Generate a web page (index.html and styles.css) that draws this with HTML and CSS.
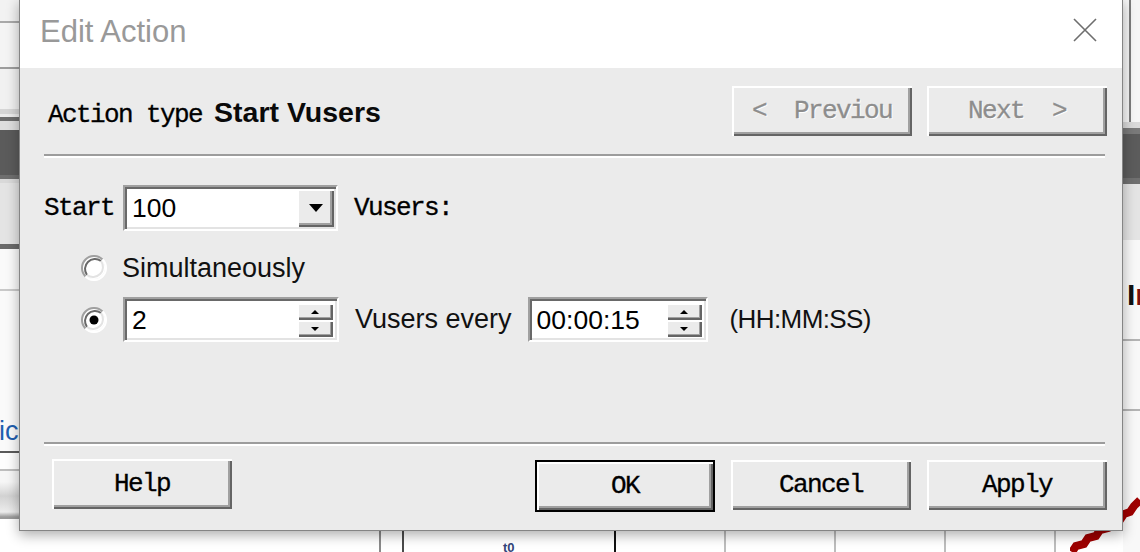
FILE: index.html
```html
<!DOCTYPE html>
<html>
<head>
<meta charset="utf-8">
<link rel="stylesheet" href="styles.css">
</head>
<body>
<div class="screen">
  <div class="strip-left"><span class="bg-text bg-ic">ic</span></div>

  <div class="dialog">
    <div class="titlebar">
      <span class="title">Edit Action</span>
      <svg class="close" width="24" height="24" viewBox="0 0 24 24"><path d="M1 1 L23 23 M23 1 L1 23" stroke="#6e6e6e" stroke-width="1.6" fill="none"/></svg>
    </div>
    <div class="dlg-body">
      <div class="header-row">
        <div class="action-type"><span class="mono">Action type</span><span class="action-name">Start Vusers</span></div>
        <div class="nav-buttons">
          <div class="btn mono disabled">&lt;  Previou</div>
          <div class="btn mono disabled">Next  &gt;</div>
        </div>
      </div>
      <div class="sep"></div>

      <div class="start-row">
        <span class="mono">Start</span>
        <div class="field combo">
          <span class="value">100</span>
          <span class="drop-btn"><svg width="14" height="8" viewBox="0 0 14 8"><path d="M0 0 H14 L7 8 Z" fill="#000"/></svg></span>
        </div>
        <span class="mono">Vusers:</span>
      </div>

      <div class="radio-row first">
        <svg class="radio" width="26" height="26" viewBox="0 0 26 26">
          <circle cx="13" cy="13" r="11" fill="#fff"/>
          <path d="M4.5 21.5 A12 12 0 0 1 21.5 4.5" stroke="#a0a0a0" stroke-width="2" fill="none"/>
          <path d="M6 20 A10 10 0 0 1 20 6" stroke="#696969" stroke-width="2" fill="none"/>
          <path d="M21.5 4.5 A12 12 0 0 1 4.5 21.5" stroke="#fff" stroke-width="2" fill="none"/>
          <path d="M20 6 A10 10 0 0 1 6 20" stroke="#e3e3e3" stroke-width="2" fill="none"/>
        </svg>
        <span class="label">Simultaneously</span>
      </div>

      <div class="radio-row second">
        <svg class="radio" width="26" height="26" viewBox="0 0 26 26">
          <circle cx="13" cy="13" r="11" fill="#fff"/>
          <path d="M4.5 21.5 A12 12 0 0 1 21.5 4.5" stroke="#a0a0a0" stroke-width="2" fill="none"/>
          <path d="M6 20 A10 10 0 0 1 20 6" stroke="#696969" stroke-width="2" fill="none"/>
          <path d="M21.5 4.5 A12 12 0 0 1 4.5 21.5" stroke="#fff" stroke-width="2" fill="none"/>
          <path d="M20 6 A10 10 0 0 1 6 20" stroke="#e3e3e3" stroke-width="2" fill="none"/>
          <circle cx="13" cy="13" r="4.5" fill="#000"/>
        </svg>
        <div class="field spin spin-count">
          <span class="value">2</span>
          <span class="spin-btns">
            <span class="spin-btn"><svg width="8" height="4" viewBox="0 0 8 4"><path d="M0 4 H8 L4 0 Z" fill="#000"/></svg></span>
            <span class="spin-btn"><svg width="8" height="4" viewBox="0 0 8 4"><path d="M0 0 H8 L4 4 Z" fill="#000"/></svg></span>
          </span>
        </div>
        <span class="label">Vusers every</span>
        <div class="field spin spin-time">
          <span class="value">00:00:15</span>
          <span class="spin-btns">
            <span class="spin-btn"><svg width="8" height="4" viewBox="0 0 8 4"><path d="M0 4 H8 L4 0 Z" fill="#000"/></svg></span>
            <span class="spin-btn"><svg width="8" height="4" viewBox="0 0 8 4"><path d="M0 0 H8 L4 4 Z" fill="#000"/></svg></span>
          </span>
        </div>
        <span class="label hint">(HH:MM:SS)</span>
      </div>

      <div class="sep sep-bottom"></div>

      <div class="footer">
        <div class="btn mono help">Help</div>
        <div class="footer-right">
          <div class="btn mono default">OK</div>
          <div class="btn mono">Cancel</div>
          <div class="btn mono">Apply</div>
        </div>
      </div>
    </div>
  </div>

  <div class="strip-right"><span class="bg-text bg-i">I<span class="bg-r">r</span></span></div>
  <div class="strip-bottom"><span class="bg-text bg-t0">t0</span></div>

  <svg class="squiggle" width="70" height="56" viewBox="0 0 70 56">
    <path d="M2 56 L6 50 L14 48 L18 42 L26 40 L30 34 L38 32 L42 26 L50 24 L54 18 L60 16 L64 10 L70 4" stroke="#9e0000" stroke-width="8" fill="none" stroke-linejoin="miter"/>
  </svg>
</div>
</body>
</html>
```

FILE: styles.css
```css
* { box-sizing: border-box; }

html, body {
  margin: 0;
  padding: 0;
  background: #ffffff;
}

.screen {
  position: relative;
  width: 1140px;
  height: 552px;
  overflow: hidden;
  display: grid;
  grid-template-columns: 19px 1104px 17px;
  grid-template-rows: 531px 21px;
  font-family: "Liberation Sans", Arial, sans-serif;
}

/* ---------- backdrop (the application window behind) ---------- */
.strip-left {
  grid-column: 1;
  grid-row: 1 / 3;
  position: relative;
  overflow: hidden;
  background: linear-gradient(to bottom,
    #f2f2f2 0 21px, #a9a9a9 21px 23px, #f4f4f4 23px 67px, #9d9d9d 67px 69px,
    #f1f1f1 69px 109px, #d6d6d6 109px 114px, #ececec 114px 117px, #6e6e6e 117px 121px,
    #dedede 121px 130px, #5b5b5b 130px 175px, #6f6f6f 175px 179px, #d9d9d9 179px 183px,
    #e4e4e4 183px 244px, #6a6a6a 244px 249px, #fafafa 249px 289px, #c9c9c9 289px 291px,
    #fafafa 291px 451px, #5a5a5a 451px 453px, #fdfdfd 453px 469px, #bdbdbd 469px 471px,
    #f6f6f6 471px 482px, #d2d2d2 496px, #ececec 512px, #9a9a9a 517px 519px, #ffffff 519px);
}

.strip-right {
  grid-column: 3;
  grid-row: 1 / 3;
  position: relative;
  overflow: hidden;
  background:
    linear-gradient(to right, transparent 0 6px, #7c7c7c 6px 8px, transparent 8px) top left / 100% 122px no-repeat,
    linear-gradient(to bottom,
      #f6f6f6 0 122px, #dadada 122px 128px, #7a7a7a 128px 134px, #5c5c5c 134px 178px,
      #707070 178px 184px, #e4e4e4 184px 240px, #f8f8f8 240px 339px, #b4b4b4 339px 341px,
      #f8f8f8 341px 409px, #b4b4b4 409px 411px, #f8f8f8 411px);
}

.strip-bottom {
  grid-column: 2;
  grid-row: 2;
  position: relative;
  overflow: hidden;
  background:
    linear-gradient(to right,
      #ffffff 0 360px, #8a8a8a 360px 362px, #ffffff 362px 383px, #4a4a4a 383px 385px,
      #ffffff 385px 595px, #111111 595px 597px, #ffffff 597px 705px, #bdbdbd 705px 707px,
      #ffffff 707px 815px, #bdbdbd 815px 817px, #ffffff 817px 925px, #bdbdbd 925px 927px,
      #ffffff 927px 1035px, #bdbdbd 1035px 1037px, #ffffff 1037px);
}

.bg-text {
  position: absolute;
  white-space: nowrap;
}
.bg-ic {
  left: -1px;
  top: 416px;
  font-size: 27px;
  color: #1f5fb0;
}
.bg-i {
  left: 4px;
  top: 278px;
  font-size: 30px;
  font-weight: bold;
  color: #111;
}
.bg-r { color: #7a1010; }
.bg-t0 {
  left: 484px;
  top: 9px;
  font-size: 13px;
  font-weight: bold;
  color: #33447a;
}

.squiggle {
  position: absolute;
  right: 0;
  bottom: 0;
  z-index: 1;
}

/* ---------- dialog window ---------- */
.dialog {
  grid-column: 2;
  grid-row: 1;
  position: relative;
  z-index: 2;
  margin-top: -1px;
  height: 532px;
  border: 1px solid #858585;
  background: #ebebeb;
  box-shadow: 0 4px 12px rgba(0, 0, 0, 0.32);
  display: flex;
  flex-direction: column;
}

.titlebar {
  height: 68px;
  flex: none;
  background: #ffffff;
  display: flex;
  justify-content: space-between;
  align-items: flex-start;
  padding: 14px 25px 0 20px;
}

.title {
  font-family: "Liberation Sans", Arial, sans-serif;
  font-size: 31px;
  line-height: 36px;
  color: #999999;
}

.close {
  margin-top: 4px;
  display: block;
}

.dlg-body {
  flex: 1;
  display: flex;
  flex-direction: column;
  padding: 0 15px 0 24px;
  background: #ebebeb;
}

.mono {
  font-family: "Liberation Mono", "Courier New", monospace;
  font-size: 26px;
  letter-spacing: -1.6px;
  -webkit-text-stroke: 0.3px currentColor;
  color: #000;
  white-space: pre;
}

.header-row {
  margin-top: 18px;
  height: 50px;
  display: flex;
  justify-content: space-between;
  align-items: center;
}

.action-type {
  padding-left: 4px;
  display: flex;
  align-items: baseline;
  gap: 12px;
  padding-top: 4px;
}

.action-name {
  font-family: "Liberation Sans", Arial, sans-serif;
  font-weight: bold;
  font-size: 28.5px;
  color: #0a0a0a;
}

.nav-buttons {
  display: flex;
  gap: 15px;
}

/* raised classic button */
.btn {
  width: 180px;
  height: 50px;
  display: flex;
  align-items: center;
  justify-content: center;
  background: #ebebeb;
  box-shadow:
    inset 2px 2px 0 #ffffff,
    inset -2px -2px 0 #646464,
    inset -4px -4px 0 #a0a0a0;
}

.btn.disabled {
  color: #8d8d8d;
  text-shadow: 1px 1px 0 #ffffff;
}

.btn.default {
  border: 2px solid #000;
}

.sep {
  margin-top: 18px;
  margin-right: 2px;
  height: 4px;
  border-top: 2px solid #9c9c9c;
  border-bottom: 2px solid #ffffff;
  flex: none;
}

.start-row {
  margin-top: 27px;
  display: flex;
  align-items: center;
  height: 46px;
}

.start-row .combo {
  margin-left: 9px;
  margin-right: 16px;
}

/* sunken field */
.field {
  position: relative;
  display: flex;
  align-items: center;
  background: #ffffff;
  border: 2px solid;
  border-color: #a0a0a0 #ffffff #ffffff #a0a0a0;
  box-shadow:
    inset 2px 2px 0 #696969,
    inset -2px -2px 0 #e3e3e3;
  padding: 2px;
}

.value {
  flex: 1;
  padding-left: 5px;
  font-family: "Liberation Sans", Arial, sans-serif;
  font-size: 26.5px;
  color: #000;
  line-height: 30px;
}

.combo {
  width: 215px;
  height: 46px;
}

.drop-btn {
  width: 37px;
  height: 38px;
  display: flex;
  align-items: center;
  justify-content: center;
  background: #ebebeb;
  box-shadow:
    inset 2px 2px 0 #ffffff,
    inset -2px -2px 0 #646464,
    inset -4px -4px 0 #a0a0a0;
}

.radio-row {
  display: flex;
  align-items: center;
  padding-left: 37px;
}

.radio-row.first {
  margin-top: 19px;
  height: 36px;
}

.radio-row.second {
  margin-top: 11px;
  height: 45px;
}

.radio {
  display: block;
  flex: none;
}

.label {
  font-family: "Liberation Sans", Arial, sans-serif;
  font-size: 27px;
  color: #111;
  white-space: nowrap;
}

.radio-row.first .label {
  margin-left: 15px;
}

.spin {
  height: 45px;
  padding: 4px 4px 3px 2px;
}

.spin-count {
  width: 216px;
  margin-left: 16px;
  margin-right: 16px;
}

.spin-time {
  width: 180px;
  margin-left: 16px;
  margin-right: 22px;
}

.spin-btns {
  width: 36px;
  height: 100%;
  display: flex;
  flex-direction: column;
}

.spin-btn {
  flex: 1;
  display: flex;
  align-items: center;
  justify-content: center;
  background: #ebebeb;
  box-shadow:
    inset 2px 2px 0 #ffffff,
    inset -2px -2px 0 #646464,
    inset -3px -3px 0 #a0a0a0;
}

.hint {
  color: #111;
  font-size: 26px;
  letter-spacing: -0.6px;
}

.sep-bottom {
  margin-top: 100px;
}

.footer {
  margin-top: 13px;
  display: flex;
  justify-content: space-between;
  align-items: flex-start;
  padding-left: 8px;
}

.footer-right {
  display: flex;
  gap: 16px;
  align-items: flex-start;
}

.footer .default {
  height: 52px;
  margin-top: 1px;
}

.footer-right .btn:not(.default) {
  margin-top: 1px;
}
```
